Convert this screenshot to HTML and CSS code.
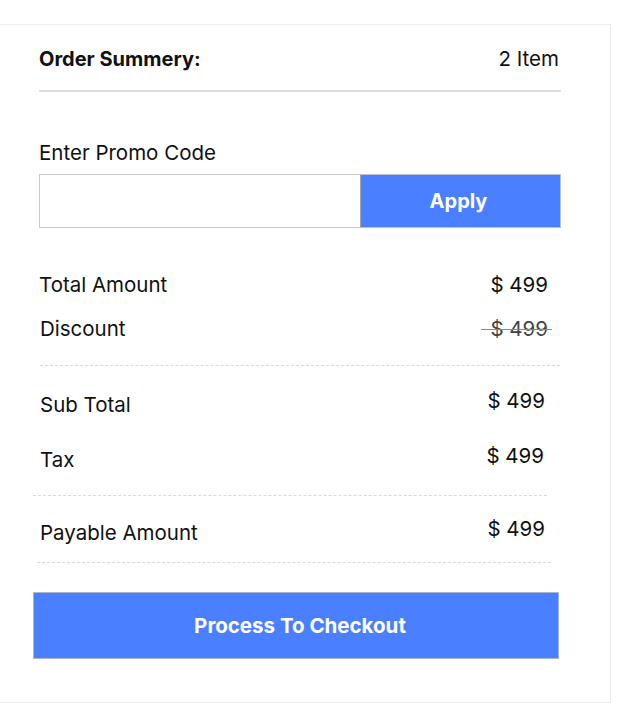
FILE: index.html
```html
<!DOCTYPE html>
<html>
<head>
<meta charset="utf-8">
<link rel="stylesheet" href="styles.css">
</head>
<body>
<div class="card">
  <div class="header">
    <span class="title">Order Summery:</span>
    <span class="count">2 Item</span>
  </div>
  <div class="promo-label">Enter Promo Code</div>
  <div class="promo">
    <input class="promo-input" type="text">
    <button class="apply">Apply</button>
  </div>
  <div class="row row-total"><span>Total Amount</span><span>$ 499</span></div>
  <div class="row row-discount"><span>Discount</span><span class="strike">$ 499</span></div>
  <div class="sep sep-1"></div>
  <div class="row row-sub"><span>Sub Total</span><span class="val">$ 499</span></div>
  <div class="row row-tax"><span>Tax</span><span class="val">$ 499</span></div>
  <div class="sep sep-2"></div>
  <div class="row row-pay"><span>Payable Amount</span><span class="val">$ 499</span></div>
  <div class="sep sep-3"></div>
  <button class="checkout">Process To Checkout</button>
</div>
</body>
</html>
```
FILE: styles.css
```css
html, body {
  margin: 0;
  padding: 0;
  background: #fff;
}
body {
  font-family: Inter, "Liberation Sans", sans-serif;
  color: #111;
}
.card {
  box-sizing: border-box;
  margin: 24px 0 0 -1px;
  width: 612px;
  height: 679px;
  border: 1px solid #ececec;
  padding: 0 0 0 39px;
}
.card > * {
  width: 522px;
}
.header {
  display: flex;
  justify-content: space-between;
  align-items: center;
  box-sizing: border-box;
  padding: 23px 2px 20px 0;
  border-bottom: 2px solid #dcdcdc;
  font-size: 20px;
  line-height: 22px;
}
.title {
  font-weight: 700;
}
.count {
  font-size: 20.5px;
}
.promo-label {
  margin-top: 50px;
  font-size: 20.5px;
  line-height: 22px;
}
.promo {
  display: flex;
  margin-top: 10px;
  height: 54px;
}
.promo-input {
  box-sizing: border-box;
  width: 321px;
  height: 54px;
  margin: 0;
  border: 1px solid #c8c8c8;
  border-right: none;
  outline: none;
  padding: 0 12px;
  font: inherit;
}
.apply {
  box-sizing: border-box;
  width: 201px;
  height: 54px;
  margin: 0;
  border: 1px solid #b9c3d6;
  border-left: 1px solid #9aa4b6;
  background: #4a80ff;
  color: #fff;
  font-family: Inter, "Liberation Sans", sans-serif;
  font-weight: 700;
  font-size: 20px;
  padding: 0 4px 0 0;
}
.row {
  display: flex;
  justify-content: space-between;
  align-items: center;
  box-sizing: border-box;
  font-size: 20.5px;
  line-height: 22px;
  height: 22px;
}
.val {
  position: relative;
  top: -4px;
}
.row-total {
  margin-top: 46px;
  padding-right: 13px;
}
.row-discount {
  margin-top: 22px;
  padding-left: 1px;
  padding-right: 13px;
}
.strike {
  position: relative;
  color: #444;
}
.strike::after {
  content: "";
  position: absolute;
  left: -9px;
  right: -4px;
  top: 11px;
  height: 1px;
  background: #8a8a8a;
}
.sep {
  height: 0;
  border-top: 1px dashed #d9d9d9;
}
.sep-1 {
  margin-top: 25px;
  margin-left: 1px;
  width: 520px;
}
.row-sub {
  margin-top: 28px;
  padding-left: 1px;
  padding-right: 16px;
}
.row-tax {
  margin-top: 33px;
  padding-left: 1px;
  padding-right: 17px;
}
.sep-2 {
  margin-top: 24px;
  margin-left: -6px;
  width: 514px;
}
.row-pay {
  margin-top: 26px;
  padding-left: 1px;
  padding-right: 16px;
}
.sep-3 {
  margin-top: 18px;
  margin-left: -2px;
  width: 514px;
}
.checkout {
  display: block;
  box-sizing: border-box;
  margin: 29px 0 0 -6px;
  width: 526px;
  height: 67px;
  border: 1px solid #a9b6cf;
  background: #4a80ff;
  color: #fff;
  font-family: Inter, "Liberation Sans", sans-serif;
  font-weight: 700;
  font-size: 20.5px;
  padding: 0 0 0 8px;
}
```
